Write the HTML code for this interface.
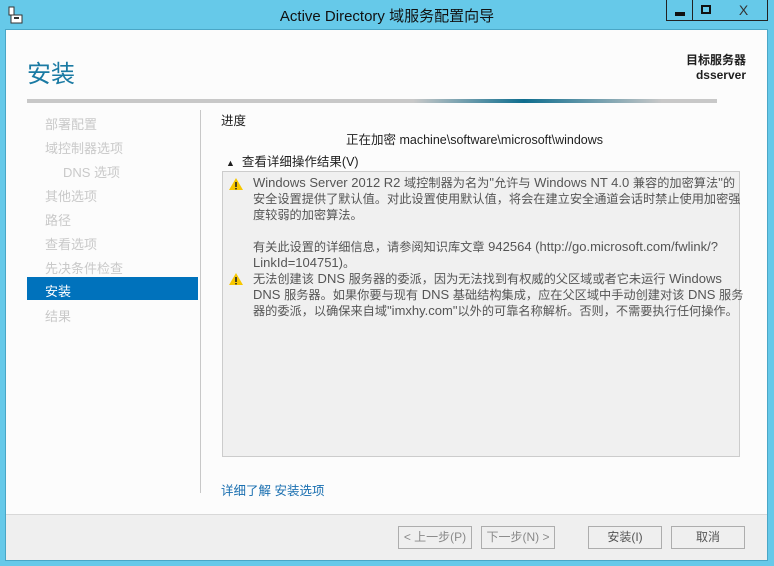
<!DOCTYPE html>
<html><head><meta charset="utf-8"><style>
*{margin:0;padding:0;box-sizing:border-box}
body{width:774px;height:566px;background:#66c9e9;font-family:"Liberation Sans","Noto Sans CJK SC",sans-serif;position:relative;overflow:hidden;font-size:12px;color:#1e1e1e}
.abs{position:absolute;white-space:nowrap}
.title{left:0;top:5px;width:774px;text-align:center;font-size:15px;color:#111}
.win{left:5px;top:29px;width:763px;height:532px;background:#fcfcfc;border:1px solid #4aa6c6}
.foot{left:6px;top:514px;width:761px;height:46px;background:#efefef;border-top:1px solid #d8d8d8}
.btn{top:526px;height:23px;border:1px solid #adadad;background:#efefef;color:#8a8a8a;font-size:12px;text-align:center;line-height:21px}
.nav{left:45px;font-size:13px;color:#c9c9c9}
.cb{top:0;height:21px;border:1px solid #222;border-top:none;background:#66c9e9}
.dt{left:253px;font-size:12.2px;color:#555;line-height:16px}
.dt b{font-weight:normal;font-size:13px}
</style></head><body>
<svg class="abs" style="left:8px;top:6px" width="16" height="18"><rect x="1" y="1" width="5" height="8" fill="#fff" stroke="#333" stroke-width="1"/><rect x="3" y="9" width="11" height="8" fill="#fff" stroke="#333"/><rect x="6" y="11" width="5" height="2" fill="#333"/></svg>
<div class="abs title">Active Directory 域服务配置向导</div>
<div class="abs cb" style="left:666px;width:27px"><div class="abs" style="left:8px;top:12px;width:10px;height:4px;background:#111"></div></div>
<div class="abs cb" style="left:693px;width:28px;border-left:none"><div class="abs" style="left:8px;top:5px;width:10px;height:9px;border:2px solid #111"></div></div>
<div class="abs cb" style="left:720px;width:48px;border-left:none;text-align:center;font-size:14px;line-height:20px;color:#333">X</div>
<div class="abs win"></div>
<div class="abs" style="left:27px;top:54px;font-size:24px;color:#1a7aa3">安装</div>
<div class="abs" style="right:28px;top:53px;font-size:12px;font-weight:bold;text-align:right;line-height:15px">目标服务器<br>dsserver</div>
<div class="abs" style="left:27px;top:99px;width:690px;height:4px;background:linear-gradient(90deg,#c8c8c8 0%,#c8c8c8 56%,#0f6e8f 72%,#c8c8c8 92%)"></div>
<div class="abs nav" style="top:114px">部署配置</div>
<div class="abs nav" style="top:138px">域控制器选项</div>
<div class="abs nav" style="top:162px;left:63px">DNS 选项</div>
<div class="abs nav" style="top:186px">其他选项</div>
<div class="abs nav" style="top:210px">路径</div>
<div class="abs nav" style="top:234px">查看选项</div>
<div class="abs nav" style="top:258px">先决条件检查</div>
<div class="abs" style="left:27px;top:277px;width:171px;height:23px;background:#0072bc"></div>
<div class="abs nav" style="top:281px;color:#fff">安装</div>
<div class="abs nav" style="top:306px">结果</div>
<div class="abs" style="left:200px;top:110px;width:1px;height:383px;background:#c8c8c8"></div>
<div class="abs" style="left:221px;top:110px;font-size:12.5px">进度</div>
<div class="abs" style="left:346px;top:129px;font-size:12.5px">正在加密 machine\software\microsoft\windows</div>
<div class="abs" style="left:226px;top:151px;font-size:12.5px"><span style="font-size:9px;margin-right:7px">&#9650;</span>查看详细操作结果(V)</div>
<div class="abs" style="left:222px;top:171px;width:518px;height:286px;background:#f0f0f0;border:1px solid #ccc"></div>
<svg class="abs" style="left:228px;top:177px" width="16" height="14"><path d="M8 1 L15 13 L1 13Z" fill="#f7c700"/><rect x="7.2" y="5" width="1.6" height="5" fill="#222"/><rect x="7.2" y="11" width="1.6" height="1.4" fill="#222"/></svg>
<svg class="abs" style="left:228px;top:272px" width="16" height="14"><path d="M8 1 L15 13 L1 13Z" fill="#f7c700"/><rect x="7.2" y="5" width="1.6" height="5" fill="#222"/><rect x="7.2" y="11" width="1.6" height="1.4" fill="#222"/></svg>
<div class="abs dt" style="top:175px"><b>Windows Server 2012 R2 </b>域控制器为名为<b>"</b>允许与<b> Windows NT 4.0 </b>兼容的加密算法<b>"</b>的<br>安全设置提供了默认值。对此设置使用默认值，将会在建立安全通道会话时禁止使用加密强<br>度较弱的加密算法。<br><br>有关此设置的详细信息，请参阅知识库文章<b> 942564 (http://go.microsoft.com/fwlink/?</b><br><b>LinkId=104751)</b>。</div>
<div class="abs dt" style="top:271px">无法创建该<b> DNS </b>服务器的委派，因为无法找到有权威的父区域或者它未运行<b> Windows</b><br><b>DNS </b>服务器。如果你要与现有<b> DNS </b>基础结构集成，应在父区域中手动创建对该<b> DNS </b>服务<br>器的委派，以确保来自域<b>"imxhy.com"</b>以外的可靠名称解析。否则，不需要执行任何操作。</div>
<div class="abs" style="left:221px;top:480px;font-size:12.5px;color:#1a6fb0">详细了解 安装选项</div>
<div class="abs foot"></div>
<div class="abs btn" style="left:398px;width:74px">&lt; 上一步(P)</div>
<div class="abs btn" style="left:481px;width:74px">下一步(N) &gt;</div>
<div class="abs btn" style="left:588px;width:74px;color:#555">安装(I)</div>
<div class="abs btn" style="left:671px;width:74px;color:#555">取消</div>
</body></html>
